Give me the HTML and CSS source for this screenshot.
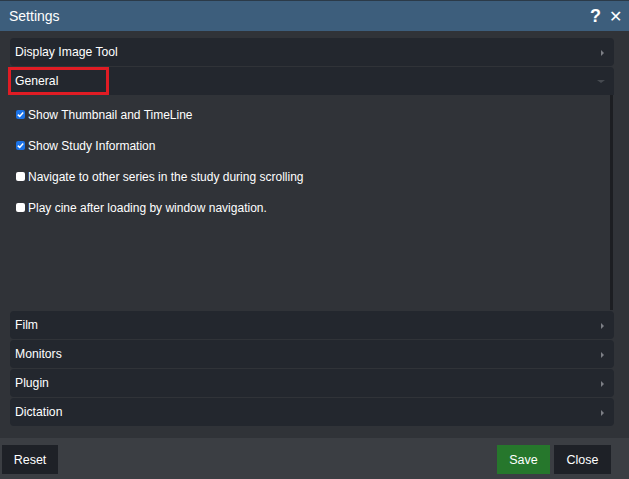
FILE: index.html
```html
<!DOCTYPE html>
<html>
<head>
<meta charset="utf-8">
<link rel="stylesheet" href="styles.css">
</head>
<body>
<div class="dialog">
  <div class="titlebar">
    <span class="title">Settings</span>
    <span class="tools"><span class="help">?</span><span class="close-x">✕</span></span>
  </div>
  <div class="body">
    <div class="panel">
      <div class="phead"><span>Display Image Tool</span><span class="caret-r"></span></div>
    </div>
    <div class="panel open">
      <div class="phead"><span class="hl">General</span><span class="caret-d"></span></div>
      <div class="pcontent">
        <div class="opts">
          <label class="opt"><span class="cb on"><svg viewBox="0 0 9 9" width="9" height="9"><path d="M1.8 4.6 L3.7 6.4 L7.2 2.4" fill="none" stroke="#fff" stroke-width="1.5"/></svg></span>Show Thumbnail and TimeLine</label>
          <label class="opt"><span class="cb on"><svg viewBox="0 0 9 9" width="9" height="9"><path d="M1.8 4.6 L3.7 6.4 L7.2 2.4" fill="none" stroke="#fff" stroke-width="1.5"/></svg></span>Show Study Information</label>
          <label class="opt"><span class="cb"></span>Navigate to other series in the study during scrolling</label>
          <label class="opt"><span class="cb"></span>Play cine after loading by window navigation.</label>
        </div>
        <div class="scroll"></div>
      </div>
    </div>
    <div class="panel">
      <div class="phead"><span>Film</span><span class="caret-r"></span></div>
    </div>
    <div class="panel">
      <div class="phead"><span>Monitors</span><span class="caret-r"></span></div>
    </div>
    <div class="panel">
      <div class="phead"><span>Plugin</span><span class="caret-r"></span></div>
    </div>
    <div class="panel">
      <div class="phead"><span>Dictation</span><span class="caret-r"></span></div>
    </div>
  </div>
  <div class="footer">
    <button class="btn reset">Reset</button>
    <span class="spacer"></span>
    <button class="btn save">Save</button>
    <button class="btn close">Close</button>
  </div>
</div>
</body>
</html>
```

FILE: styles.css
```css
html, body {
  margin: 0;
  padding: 0;
  background: #303338;
  width: 629px;
  height: 479px;
  overflow: hidden;
  font-family: "Liberation Sans", Arial, sans-serif;
}
.dialog {
  display: flex;
  flex-direction: column;
  height: 479px;
}
.titlebar {
  height: 30px;
  border-top: 1px solid #2b3a48;
  background: #3d5e7c;
  color: #fff;
  display: flex;
  align-items: center;
  justify-content: space-between;
  padding: 0 7px 0 9px;
}
.title {
  font-size: 14px;
}
.tools {
  display: flex;
  align-items: center;
  gap: 8px;
}
.help {
  font-size: 18px;
  font-weight: bold;
}
.close-x {
  font-size: 16px;
}
.body {
  flex: 1;
  padding: 7px 15px 0 10px;
  display: flex;
  flex-direction: column;
  gap: 1px;
}
.panel {
  background: #303338;
}
.phead {
  height: 28px;
  background: #23272e;
  border-radius: 4px;
  display: flex;
  align-items: center;
  justify-content: space-between;
  padding: 0 10px 0 5px;
  color: #fff;
  font-size: 12.2px;
}
.panel.open .phead {
  border-radius: 4px 4px 0 0;
}
.hl {
  box-sizing: border-box;
  border: 3px solid #e01c24;
  display: flex;
  align-items: center;
  align-self: flex-start;
  width: 101px;
  height: 28px;
  margin-left: -7px;
  padding-left: 4px;
}
.caret-r {
  width: 0;
  height: 0;
  border-top: 3px solid transparent;
  border-bottom: 3px solid transparent;
  border-left: 3px solid #7c7f85;
  margin-top: 2px;
}
.caret-d {
  width: 0;
  height: 0;
  border-left: 4px solid transparent;
  border-right: 4px solid transparent;
  border-top: 3px solid #464a50;
  margin-right: -1px;
}
.pcontent {
  height: 215px;
  display: flex;
  background: #303338;
}
.opts {
  flex: 1;
  padding: 11px 0 0 6px;
  display: flex;
  flex-direction: column;
  gap: 14px;
}
.opt {
  display: flex;
  align-items: center;
  color: #fff;
  font-size: 12px;
  height: 17px;
}
.cb {
  width: 9px;
  height: 9px;
  background: #fff;
  border-radius: 2px;
  margin-right: 3px;
  display: inline-flex;
  align-items: center;
  justify-content: center;
}
.cb.on {
  background: #1a73e8;
}
.scroll {
  width: 3px;
  background: #1c1e22;
  margin-right: 1px;
}
.footer {
  margin-top: 11px;
  height: 41px;
  background: #3b3e43;
  display: flex;
  align-items: flex-start;
  padding: 7px 18px 0 2px;
  gap: 4px;
  box-sizing: border-box;
}
.spacer {
  flex: 1;
}
.btn {
  height: 29px;
  background: #1e2127;
  color: #fff;
  border: none;
  font-family: "Liberation Sans", Arial, sans-serif;
  font-size: 12.5px;
  padding: 0;
}
.btn.reset {
  width: 56px;
}
.btn.save {
  background: #26772c;
  width: 53px;
}
.btn.close {
  width: 57px;
}
```
